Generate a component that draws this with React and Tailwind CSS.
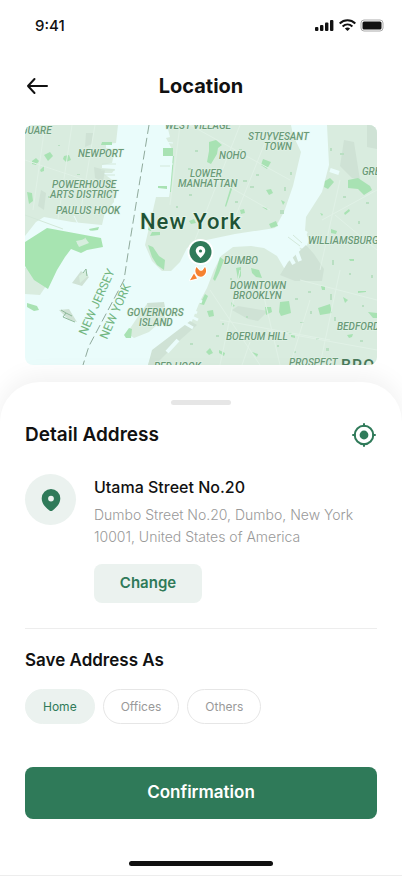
import { useState } from "react";

const LABELS = [
  { t: "JUARE", x: 22, y: 134 },
  { t: "NEWPORT", x: 78, y: 157 },
  { t: "POWERHOUSE", x: 52, y: 188 },
  { t: "ARTS DISTRICT", x: 50, y: 198 },
  { t: "PAULUS HOOK", x: 56, y: 214 },
  { t: "WEST VILLAGE", x: 165, y: 129 },
  { t: "STUYVESANT", x: 248, y: 140 },
  { t: "TOWN", x: 264, y: 150 },
  { t: "NOHO", x: 219, y: 159 },
  { t: "LOWER", x: 190, y: 177 },
  { t: "MANHATTAN", x: 178, y: 187 },
  { t: "GREENPOINT", x: 362, y: 175 },
  { t: "WILLIAMSBURG", x: 308, y: 244 },
  { t: "DUMBO", x: 224, y: 264 },
  { t: "DOWNTOWN", x: 230, y: 289 },
  { t: "BROOKLYN", x: 233, y: 299 },
  { t: "GOVERNORS", x: 127, y: 316 },
  { t: "ISLAND", x: 139, y: 326 },
  { t: "BEDFORD", x: 337, y: 330 },
  { t: "BOERUM HILL", x: 226, y: 340 },
  { t: "PROSPECT", x: 289, y: 366 },
  { t: "RED HOOK", x: 154, y: 370 },
];

const PARKS = [
  "M32 161l4-3 3 3-3 4-4-1z", "M44 155l6-3 3 4-5 5z", "M64 156l5-1 2 5-5 2-3-3z",
  "M40 170l4-4 0 5-3 1z", "M27 192l5 1 1 8-4 3z", "M102 142h10v3h-11z", "M163 148h10v8h-10z",
  "M173 156h1l-3 36h-1z", "M158 186h9v3l-9-1z", "M209 142l7-2 6 5-4 3-1 6-6 10-4-2 2-11z",
  "M263 159l8 3-4 7-6-4z", "M266 190l5-1 2 4-4 2z", "M231 186h2l-7 21-1-1z",
  "M240 210l4-1 1 4-4 1z", "M262 207l6 1-1 2z", "M269 224l7-3 2 5-7 2z", "M281 200l4 2-2 3z",
  "M325 181l5-3 4 4-6 7-4-2z", "M348 180l10-2 12 8 2 4-8 5-6-6-10-1z",
  "M331 229l6 2-1 3-5-1z", "M320 213l3 1-1 2z", "M344 213l5-4 1 2-5 4z",
  "M150 220l3 1-2 10-3-1z", "M152 232l8 0 0 3-10 1z", "M189 221l5-2 2 4-5 1z",
  "M148 245l5 2 6 9 6 4-1 10-7-5-5-8z", "M220 257l4 3-5 13-4 8-2-2 4-12z",
  "M236 268l5-1 0 9-3 4zM251 268l8 2 3 8-6-1-4-4z", "M280 302l9-1 2 12-10 3-2-4z",
  "M318 308l12-4 2 9-12 2z", "M265 307l6 0 1 5-6 3z", "M207 311l6-1 1 6-5 1z",
  "M231 302l4 4-3 1z", "M286 331l6 2-2 2z", "M219 350l6 3-1 3-5-3z", "M252 352l6 2-1 3z",
  "M291 335l4 0 0 3-4-1z", "M343 297l5 3-3 3z", "M349 259h5v2h-4z", "M358 291l8 0 0 1-8 1z",
  "M368 312l9 1v5h-4z", "M321 286l4 0 0 4-3 0z", "M347 335l6-1-1 3-3 1z",
  "M89 229l10-2-1 3-8 1z", "M124 335l5-7 3 1-1 9-5 0z", "M27 303l10 3 2 4-5 1-7-4z",
  "M200 304l5-10 3 2-4 9z", "M206 352l4-4 3 5-4 2z",
];

const SPECKS = [
  [243, 180, 4, 2], [256, 174, 3, 2], [284, 187, 2, 4], [290, 172, 2, 3], [280, 210, 4, 4],
  [330, 148, 2, 3], [340, 153, 4, 2], [343, 196, 3, 2], [358, 221, 2, 3], [366, 202, 3, 2],
  [239, 149, 3, 1], [195, 150, 3, 2], [188, 168, 3, 2], [250, 186, 4, 2], [235, 201, 3, 2],
  [332, 260, 2, 5], [349, 273, 2, 2], [330, 294, 2, 6], [295, 298, 3, 2], [308, 291, 3, 2],
  [334, 317, 2, 4], [300, 322, 4, 1], [316, 338, 3, 2], [294, 351, 2, 2], [360, 340, 3, 2],
  [230, 278, 2, 2], [222, 323, 2, 2], [216, 335, 3, 2], [246, 316, 2, 2], [190, 343, 3, 2],
  [362, 305, 2, 2], [326, 348, 3, 3], [277, 345, 2, 2], [310, 311, 2, 3], [371, 275, 2, 3],
  [58, 145, 2, 1], [77, 174, 3, 1], [48, 196, 3, 2], [189, 194, 3, 2], [176, 206, 2, 2],
];

function CityMap() {
  return (
    <svg
      viewBox="25 125 352 240"
      preserveAspectRatio="xMidYMid slice"
      className="block aspect-[22/15] w-full rounded-lg bg-[#eafcfb]"
      role="img"
      aria-label="Map of New York"
    >
      {/* Land */}
      <g fill="#d9ecdf">
        <path d="M25 125H118l-2 18-10 1v4l9 2-3 13-10 2v3l13 1-3 4h-9l12 9-1 20-9 10-3 13-30-3-28-5-8 5-11 14Z" />
        <path d="M167 125l3 12-4 1 7 13-1 27-3 19h-13l-5 22-6 26 7 16 10 10 9 0 9-9 7-14 10-6 38-8 40-6 9-16 9-26 8-34-8-17-2-10Z" />
        <path d="M327 125h50v240H148l4-12 30-22 10-10 8-20 7-13 7-18 7-14 12-9 18-1 13 2 13 8 7 12 12 3-3-12 8 4 3-7-5-9 6 3 4-10-4-9 1-14 16-25 7-27Z" />
        <path d="M127 333l14-21 6-8h16l2 14-16 14-15 6Z" />
        <path d="M25 268l7-3 14 21-6 9-15-1Z" />
      </g>

      {/* Built-up tints */}
      <g fill="#cfe2d5">
        <path d="M344 140l10 2 6 38-8-2-12-12ZM367 125h10v24l-10-2ZM288 262l18-17 8 9 10 15-2 12h-27l-15-6ZM238 306l30 5-10 10-10-2-16-9Z" />
        <path d="M86 133l7 0-1 11-7 3ZM41 190l5 3-2 17-6-4ZM94 167l11 3-2 12-8-4ZM147 303l17-1 1 5-17 1ZM152 350l38-29 7 4-18 16-24 24h-7Z" />
        <path d="M81 271l8 6-7 9-10-3ZM59 310l10-1 8 13-9-3Z" />
      </g>

      {/* Parks */}
      <path fill="#a7e4b1" d="M25 242l22-14 54 10 2 9-16 3-6 3-10-4-6 8-8 13-9 19-14-9-9-14Z" />
      <g fill="#a8e2b3">
        {PARKS.map((d) => (
          <path key={d} d={d} />
        ))}
      </g>
      <g fill="#b9dfc2">
        {SPECKS.map(([x, y, w, h]) => (
          <rect key={`${x}-${y}`} x={x} y={y} width={w} height={h} />
        ))}
      </g>

      {/* Piers, channels and docks */}
      <g fill="none" stroke="#eafcfb" strokeWidth="2">
        <path d="M45 224l56 10" strokeWidth="3" />
        <path d="M74 216l4 8M163 142l10 1M162 164h11M158 178h9M158 192h9" strokeWidth="1" />
        <path d="M306 231l-8 16M284 246l10 18M294 244l6 17M330 170l9 3M167 352l11-12" strokeWidth="4" />
        <path d="M182 305l15 8M184 313l14 7M181 321l12 7M190 297l12 5" strokeWidth="3" />
      </g>
      <g fill="none" stroke="#d3e8da" strokeWidth="1">
        <path d="M102 164h14M101 170h14M104 175h11M160 166h10M288 237l12 9M293 235l9 8M25 215l38 14M77 244l9-6" />
      </g>
      <path d="M76 241l10-2 3 4-10 4ZM79 276l7-5 2 5-8 7Z" fill="#d7eede" />
      <path d="M83 273l3-4 1 7M66 313l6 3M61 310l5 3-3 4 7 3 5 2" fill="none" stroke="#8eb99a" strokeWidth="1" />

      {/* Faint street lines */}
      <g fill="none" stroke="#e0f1e6" strokeWidth="1">
        <path d="M25 160l60 20M45 125l-12 85M72 125l-14 94M95 125l-15 90M180 125l-10 80M200 170l70 40M190 125l100 55M240 125l-45 115M270 130l-40 100M340 180l-20 90M377 190l-55 30M335 215l42 35M210 290l50 75M240 270l-20 95M260 280l20 85M220 320l110 20M300 280l77 20M310 300l-20 65M340 270l-20 95M267 330l110 20M250 342l-8 23" />
      </g>

      {/* State line */}
      <path d="M149 125l-20 122-5 33-35 66-6 19" fill="none" stroke="#8fa99b" strokeWidth="1" strokeDasharray="9 4" />

      {/* Place names */}
      <g fontFamily="Roboto, sans-serif" fontStyle="italic" fontWeight="500" fontSize="10" fill="#6a9a78" stroke="#e3f4e8" strokeWidth="1" paintOrder="stroke">
        {LABELS.map(({ t, x, y }) => (
          <text key={t} x={x} y={y}>
            {t}
          </text>
        ))}
      </g>
      <g fontFamily="Roboto, sans-serif" fill="#71b580" fontSize="12">
        <text transform="translate(86 336) rotate(-66)">NEW JERSEY</text>
        <text transform="translate(107 340) rotate(-66)">NEW YORK</text>
      </g>
      <text x="341" y="371" fontFamily="Roboto, sans-serif" fontWeight="500" fontSize="16" letterSpacing="1" fill="#4a7a5b">
        BROOKLYN
      </text>
      <text x="140" y="229" fontFamily="Roboto, sans-serif" fontWeight="500" fontSize="22" letterSpacing="1" fill="#1f5336" stroke="#e3f4e8" strokeWidth="2" paintOrder="stroke">
        New York
      </text>

      {/* Current position marker */}
      <g fill="#f58232" stroke="#fff" strokeWidth="2" strokeLinejoin="round" paintOrder="stroke">
        <path d="M196.500 267c-1.500 2.500-1.700 5.500.5 8 1.600 1.800 4.500 2.200 6.500.8 2.700-1.900 3.400-5.300 1.500-8.800l-2.300 3.200c-1 .8-2.600.8-3.400 0Z" />
        <path d="M194 273.500l3 5-7 1.800Z" />
      </g>
      <circle cx="200.500" cy="252" r="13" fill="#fff" />
      <circle cx="200.500" cy="252" r="11" fill="#2f7a59" />
      <path d="M200.500 246a4.800 4.800 0 0 0-4.800 4.800c0 3.300 4.800 7.200 4.800 7.200s4.800-3.900 4.800-7.200a4.800 4.800 0 0 0-4.800-4.800Z" fill="#fff" />
      <circle cx="200.500" cy="251" r="1.600" fill="#2f7a59" />
    </svg>
  );
}

function StatusBar() {
  return (
    <div className="flex h-12 items-center justify-between pt-1 pr-4 pl-[35px] text-[#111]">
      <span className="text-[15px] leading-5 font-medium">9:41</span>
      <svg width="72" height="14" viewBox="0 0 72 14" fill="#111" aria-hidden="true">
        <rect x="1" y="8" width="3.400" height="4" rx="1" />
        <rect x="6" y="6" width="3.400" height="6" rx="1" />
        <rect x="11" y="3.500" width="3.400" height="8.500" rx="1" />
        <rect x="16" y="1" width="3.400" height="11" rx="1" />
        <g fill="none" stroke="#111" strokeWidth="2">
          <path d="M25.700 4.500c4.500-4.200 11.100-4.200 15.600 0M28.600 7.500c2.900-2.700 6.900-2.700 9.800 0" />
        </g>
        <path d="M33.500 12.100l-2.600-2.700c1.500-1.300 3.700-1.300 5.200 0Z" />
        <rect x="47" y="1" width="22" height="11" rx="3" fill="none" stroke="#aaa" />
        <rect x="48.500" y="2.500" width="19" height="8" rx="1.500" />
      </svg>
    </div>
  );
}

function PinIcon() {
  return (
    <svg width="20" height="24" viewBox="0 0 20 24" aria-hidden="true">
      <path fillRule="evenodd" fill="#2f7a59" d="M10 1A9.300 9.300 0 0 0 .7 10.300C.7 16 5 20 8.400 22.400a2.700 2.700 0 0 0 3.200 0C15 20 19.300 16 19.300 10.300A9.300 9.300 0 0 0 10 1Zm0 6.700a2.900 2.900 0 1 1 0 5.800 2.900 2.900 0 0 1 0-5.800Z" />
    </svg>
  );
}

const PLACES = ["Home", "Offices", "Others"];

export default function App() {
  const [place, setPlace] = useState("Home");

  return (
    <div className="flex min-h-screen flex-col bg-white font-['Inter',sans-serif] text-[#111]">
      <StatusBar />
      <header className="mb-px grid h-[76px] grid-cols-[24px_1fr_24px] items-center px-[25px]">
        <button type="button" aria-label="Back" className="flex">
          <svg width="24" height="24" viewBox="0 0 24 24" fill="none" stroke="#111" strokeWidth="2" strokeLinecap="round" strokeLinejoin="round" aria-hidden="true">
            <path d="M22 12H3M9.500 5 3 12l6.500 7" />
          </svg>
        </button>
        <h1 className="text-center text-xl font-bold">Location</h1>
      </header>

      <div className="px-[25px]">
        <CityMap />
      </div>

      <main className="mt-[17px] flex flex-1 flex-col rounded-t-[40px] border-b border-[#ededed] bg-white px-[25px] pt-[18px] shadow-[0_-6px_24px_rgba(0,0,0,0.06)]">
        <div className="h-[5px] w-[60px] self-center rounded-full bg-[#e6e6e6]" />

        <div className="mt-[17px] flex items-center justify-between">
          <h2 className="text-[19px] leading-6 font-semibold">Detail Address</h2>
          <button type="button" aria-label="Use current location" className="flex">
            <svg width="26" height="26" viewBox="0 0 26 26" fill="none" stroke="#2f7a59" strokeWidth="2" strokeLinecap="round" aria-hidden="true">
              <circle cx="13" cy="13" r="9.300" />
              <circle cx="13" cy="13" r="4.400" fill="#2f7a59" stroke="none" />
              <path d="M13 2v2M13 22v2M2 13h2M22 13h2" />
            </svg>
          </button>
        </div>

        <section className="mt-[26px] flex gap-[18px]">
          <div className="flex size-[51px] shrink-0 items-center justify-center rounded-full bg-[#ebf2ef]">
            <PinIcon />
          </div>
          <div className="pt-px">
            <h3 className="text-base leading-6 font-medium">Utama Street No.20</h3>
            <p className="mt-[5px] max-w-[260px] text-sm leading-[22px] font-light text-[#999]">
              Dumbo Street No.20, Dumbo, New York 10001, United States of America
            </p>
            <button type="button" className="mt-4 h-[39px] w-[108px] rounded-lg bg-[#ebf2ef] text-[15px] font-semibold text-[#2f7a59]">
              Change
            </button>
          </div>
        </section>

        <hr className="mt-[25px] border-[#ededed]" />

        <h2 className="mt-[19px] text-[17px] leading-6 font-semibold">Save Address As</h2>
        <div className="mt-[17px] flex gap-2">
          {PLACES.map((name) => (
            <button
              key={name}
              type="button"
              aria-pressed={place === name}
              onClick={() => setPlace(name)}
              className={`h-[35px] rounded-full border px-[17px] text-xs ${
                place === name
                  ? "border-[#ebf2ef] bg-[#ebf2ef] text-[#2f7a59]"
                  : "border-[#e6e6e6] bg-white text-[#999]"
              }`}
            >
              {name}
            </button>
          ))}
        </div>

        <button type="button" className="mt-[43px] h-[52px] w-full rounded-lg bg-[#2f7a59] text-[17px] font-semibold text-white">
          Confirmation
        </button>

        <div className="mt-[42px] mb-2 h-[5px] w-36 self-center rounded-full bg-[#111]" />
      </main>
    </div>
  );
}
